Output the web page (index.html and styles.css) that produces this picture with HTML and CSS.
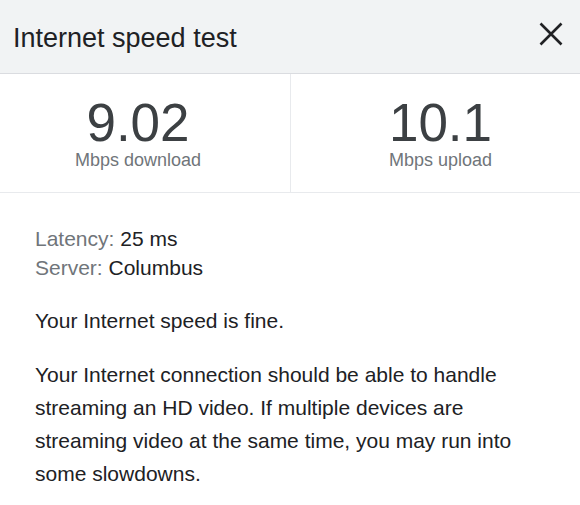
FILE: index.html
```html
<!DOCTYPE html>
<html>
<head>
<meta charset="utf-8">
<link rel="stylesheet" href="styles.css">
</head>
<body>
<div class="dialog">
  <header class="header">
    <h1 class="title">Internet speed test</h1>
    <button class="close" aria-label="Close">
      <svg width="24" height="24" viewBox="0 0 24 24"><path d="M1.5 1.5 L22.5 22.5 M22.5 1.5 L1.5 22.5" stroke="#202124" stroke-width="2.6" fill="none"/></svg>
    </button>
  </header>
  <section class="stats">
    <div class="stat stat-left">
      <div class="value">9.02</div>
      <div class="unit">Mbps download</div>
    </div>
    <div class="stat stat-right">
      <div class="value">10.1</div>
      <div class="unit">Mbps upload</div>
    </div>
  </section>
  <section class="body">
    <div class="meta">
      <div class="row"><span class="label">Latency:</span> 25 ms</div>
      <div class="row"><span class="label">Server:</span> Columbus</div>
    </div>
    <p class="p1">Your Internet speed is fine.</p>
    <p class="p2">Your Internet connection should be able to handle streaming an HD video. If multiple devices are streaming video at the same time, you may run into some slowdowns.</p>
  </section>
</div>
</body>
</html>
```

FILE: styles.css
```css
html, body {
  margin: 0;
  padding: 0;
  background: #ffffff;
}
body {
  font-family: "Liberation Sans", Arial, sans-serif;
  color: #202124;
}
.dialog {
  width: 580px;
}
.header {
  height: 73px;
  background: #f1f3f4;
  border-bottom: 1px solid #dadce0;
  display: flex;
  align-items: center;
  justify-content: space-between;
  padding: 0 17px 0 13px;
}
.title {
  margin: 0;
  font-size: 27px;
  font-weight: normal;
  color: #202124;
  line-height: 30px;
  padding-top: 2px;
}
.close {
  background: none;
  border: 0;
  padding: 0;
  width: 24px;
  height: 24px;
  display: flex;
  margin-top: -6px;
}
.stats {
  display: flex;
  height: 118px;
  border-bottom: 1px solid #e8eaed;
}
.stat {
  box-sizing: border-box;
  width: 290px;
  display: flex;
  flex-direction: column;
  align-items: center;
  padding-top: 25px;
}
.stat-left {
  width: 291px;
  border-right: 1px solid #e8eaed;
  padding-right: 14px;
}
.stat-right {
  width: 289px;
  padding-left: 10px;
}
.value {
  font-size: 53px;
  line-height: 48px;
  color: #3c4043;
}
.unit {
  font-size: 18px;
  line-height: 20px;
  color: #70757a;
  margin-top: 3px;
}
.body {
  padding: 31px 35px 0 35px;
  font-size: 21px;
}
.row {
  line-height: 29px;
}
.label {
  color: #70757a;
}
.p1 {
  margin: 22px 0 0 0;
  line-height: 33px;
}
.p2 {
  margin: 21px 0 0 0;
  line-height: 33px;
}
```
